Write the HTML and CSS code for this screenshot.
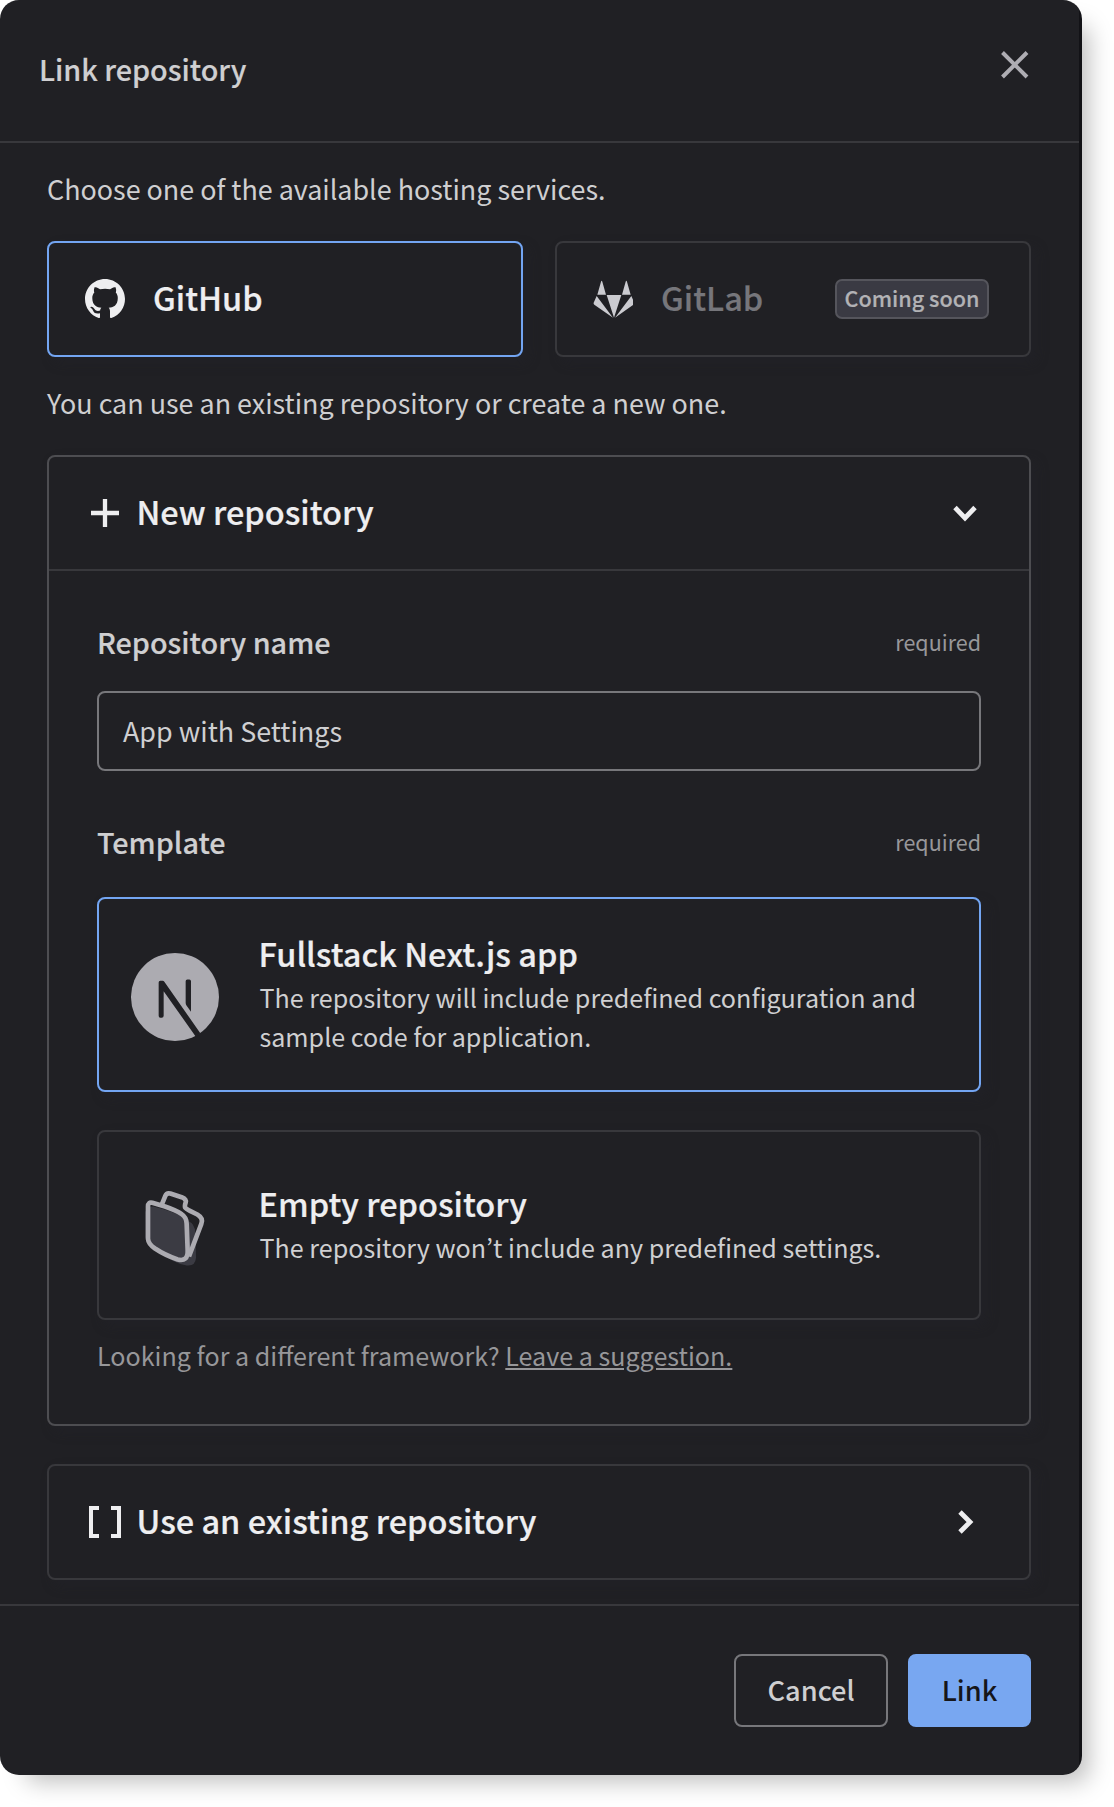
FILE: index.html
```html
<!DOCTYPE html>
<html lang="en">
<head>
<meta charset="utf-8">
<title>Link repository</title>
<link rel="stylesheet" href="styles.css">
</head>
<body>
<div class="modal" role="dialog">
  <header class="modal-header">
    <h1 class="modal-title">Link repository</h1>
    <svg class="close" viewBox="0 0 30 30"><path d="M2.5 2.5 27 27M27 2.5 2.5 27"/></svg>
  </header>

  <main class="modal-body">
    <p class="intro">Choose one of the available hosting services.</p>
    <div class="services">
      <div class="card service selected">
        <svg class="service-icon" viewBox="0 0 16 16"><path fill="#eeeef0" fill-rule="evenodd" d="M8 0C3.58 0 0 3.58 0 8c0 3.54 2.29 6.53 5.47 7.59.4.07.55-.17.55-.38 0-.19-.01-.82-.01-1.49-2.01.37-2.53-.49-2.69-.94-.09-.23-.48-.94-.82-1.13-.28-.15-.68-.52-.01-.53.63-.01 1.08.58 1.23.82.72 1.21 1.87.87 2.33.66.07-.52.28-.87.51-1.07-1.78-.2-3.64-.89-3.64-3.95 0-.87.31-1.59.82-2.15-.08-.2-.36-1.02.08-2.12 0 0 .67-.21 2.2.82.64-.18 1.32-.27 2-.27s1.36.09 2 .27c1.53-1.04 2.2-.82 2.2-.82.44 1.1.16 1.92.08 2.12.51.56.82 1.27.82 2.15 0 3.07-1.87 3.75-3.65 3.95.29.25.54.73.54 1.48 0 1.07-.01 1.93-.01 2.2 0 .21.15.46.55.38A8.01 8.01 0 0 0 16 8c0-4.42-3.58-8-8-8z"/></svg>
        <span class="heading">GitHub</span>
      </div>
      <div class="card service">
        <svg class="service-icon" viewBox="0 0 40 40"><g fill="#cbcbd0" transform="translate(-12 -9) scale(.3333)"><path d="M60 35Q62 29 64 35L75 74H49ZM134 35Q136 29 138 35L149 74H123ZM77 75H121L99 143ZM47 78 38 98Q37 102 40 104L96 143ZM151 78 160 98Q161 102 158 104L102 143Z"/></g></svg>
        <span class="heading muted">GitLab</span>
        <span class="badge">Coming soon</span>
      </div>
    </div>

    <p class="intro">You can use an existing repository or create a new one.</p>
    <section class="card panel">
      <div class="panel-head">
        <svg class="panel-icon" viewBox="0 0 32 32"><path d="M2 16H30M16 2V30"/></svg>
        <h2 class="heading">New repository</h2>
        <svg class="chevron" viewBox="0 0 28 28"><path d="M4 8.5 14 19 24 8.5"/></svg>
      </div>
      <div class="panel-body">
        <div class="field-head"><label class="field-label">Repository name</label><span class="required">required</span></div>
        <div class="input">App with Settings</div>
        <div class="field-head template-head"><span class="field-label">Template</span><span class="required">required</span></div>
        <div class="card template nextjs selected">
          <svg class="template-icon" viewBox="0 0 88 88"><g transform="translate(-21 -22.83) scale(.3333)"><circle cx="195" cy="200.5" r="132" fill="#acabb1"/><path fill="#202024" d="M146 157q0-5 5-5h7q3 0 5 3L271 309Q265 315 257 319L161 183V257q0 6-6 6h-4q-5 0-5-6ZM227 153q0-5 5-5h6q5 0 5 5V245L229 225Q227 222 227 218Z"/></g></svg>
          <div class="template-text">
            <h3 class="heading template-title">Fullstack Next.js app</h3>
            <p class="description">The repository will include predefined configuration and sample code for application.</p>
          </div>
        </div>
        <div class="card template empty">
          <svg class="template-icon" viewBox="0 0 88 88"><g transform="translate(-21 -13.5) scale(.3333)"><path fill="#3b3b43" d="M106 125Q110 108 130 108Q190 122 230 145Q256 158 257 185L258 262Q256 288 230 285Q190 278 150 245L122 225L106 200Z"/><path fill="#202024" d="M160 102 167 77 181 70 226 84 225 112 270 142 257 190Q256 160 232 150Q215 130 160 102Z"/><path class="folder-line" d="M155 103 166 76Q170 66 181 69L215 80Q230 86 227 96 223 108 226 112 228 115 240 121L262 132Q281 143 274 160L237 258"/><path class="folder-line" d="M114 108Q114 94 127 97L165 108Q200 120 215 131 230 141 230 160L233 240Q234 275 203 267 165 254 135 234 115 220 114 205Z"/></g></svg>
          <div class="template-text">
            <h3 class="heading template-title">Empty repository</h3>
            <p class="description">The repository won<span class="apostrophe">’</span>t include any predefined settings.</p>
          </div>
        </div>
        <p class="hint">Looking for a different framework? <a class="hint-link">Leave a suggestion.</a></p>
      </div>
    </section>

    <section class="card existing">
      <svg class="panel-icon" viewBox="0 0 32 32"><path class="bracket" d="M10 2H2V30H10M22 2H30V30H22"/></svg>
      <h2 class="heading">Use an existing repository</h2>
      <svg class="chevron" viewBox="0 0 28 28"><path d="M9 4 19 14 9 24"/></svg>
    </section>
  </main>

  <footer class="modal-footer">
    <button class="button">Cancel</button>
    <button class="button primary">Link</button>
  </footer>
</div>
</body>
</html>
```
FILE: styles.css
```css
* { box-sizing: border-box; }

body {
  margin: 0;
  height: 1807px;
  overflow: hidden;
  background: #fff;
  font-family: "Noto Sans CJK SC", "Noto Sans", sans-serif;
  color: #cfcfd1;
}

h1, h2, h3, p { margin: 0; font-weight: 400; }
svg { display: block; flex: none; fill: none; }

.modal {
  width: 1082px;
  height: 1775px;
  padding-right: 3px;
  border-radius: 19px;
  background: linear-gradient(to right, #202024 1079px, #121216 1079px);
  box-shadow: 16px 16px 24px -10px rgba(0, 0, 0, .27);
}

.modal-header {
  display: flex;
  justify-content: space-between;
  align-items: flex-start;
  height: 143px;
  padding: 48px 49px 0 39px;
  border-bottom: 2px solid #38383c;
}
.modal-title { font-size: 28.75px; font-weight: 500; line-height: 42px; }
.close { width: 30px; height: 30px; margin-top: 2px; stroke: #aeadb3; stroke-width: 4; }

.modal-title, .heading, .field-label, .badge { -webkit-text-stroke: .2px currentColor; }

.modal-body { padding: 0 48px 24px 47px; }
.intro { margin: 26px 0 32px; font-size: 26.9px; line-height: 40px; }

.card {
  border: 2px solid #38383c;
  border-radius: 8px;
  background: #202024;
  box-shadow: 6px 6px 12px rgba(36, 36, 43, .4);
}
.card.selected { border-color: #73a5f2; }

.heading { padding-bottom: 4px; font-size: 32.5px; font-weight: 500; line-height: 44px; color: #eeeef0; }
.muted { color: #76767b; }

.services { display: grid; grid-template-columns: 1fr 1fr; gap: 32px; }
.service { display: flex; align-items: center; height: 116px; padding: 0 40px 0 36px; }
.service-icon { width: 40px; height: 40px; margin-right: 28px; }
.badge {
  display: flex;
  align-items: center;
  justify-content: center;
  width: 154px;
  height: 40px;
  margin-left: auto;
  padding-bottom: 3px;
  border: 2px solid #55555c;
  border-radius: 7px;
  background: #3a3a43;
  color: #b2b2b5;
  font-size: 21.6px;
  font-weight: 500;
}

.panel { height: 971px; border-color: #4d4d51; }
.panel-head, .existing { display: flex; align-items: center; padding: 0 50px 0 40px; }
.panel-head { height: 114px; border-bottom: 2px solid #38383c; }
.panel-icon { width: 32px; height: 32px; margin-right: 15.5px; stroke: #eeeef0; stroke-width: 4.3; }
.bracket { stroke-width: 4; }
.chevron { width: 28px; height: 28px; margin-left: auto; stroke: #eeeef0; stroke-width: 4.8; }

.panel-body { padding: 51px 48px 0; }
.field-head { display: flex; justify-content: space-between; line-height: 40px; }
.template-head { margin-top: 51px; }
.field-label { font-size: 28.75px; font-weight: 500; }
.required { color: #97979a; font-size: 21.5px; }
.input {
  display: flex;
  align-items: center;
  height: 80px;
  margin-top: 29px;
  padding: 0 24px 1px;
  border: 2px solid #77777b;
  border-radius: 8px;
  font-size: 26.9px;
}

.template { display: flex; align-items: center; gap: 39.5px; padding: 0 32px; }
.template.nextjs { height: 195px; margin-top: 35px; }
.template.empty { height: 190px; margin-top: 38px; }
.template-icon { width: 88px; height: 88px; margin-top: 5px; }
.template-text { padding-bottom: 2px; }
.template-title { padding: 0; margin-bottom: 4px; line-height: 42px; }
.description { padding-left: 1px; font-size: 25.1px; line-height: 39px; }
.apostrophe { font-family: "Noto Sans CJK KR", "Noto Sans", sans-serif; }
.folder-line { stroke: #acabb1; stroke-width: 14; stroke-linejoin: round; }

.hint { margin-top: 16px; color: #97979a; font-size: 25.1px; line-height: 39px; }
.hint-link { text-decoration: underline; }

.existing { height: 116px; margin-top: 38px; }

.modal-footer {
  display: flex;
  justify-content: flex-end;
  gap: 20px;
  padding: 48px 48px 0;
  border-top: 2px solid #38383c;
}
.button {
  width: 154px;
  height: 73px;
  padding: 0 0 3px;
  border: 2px solid #77777b;
  border-radius: 8px;
  background: none;
  color: #cfcfd1;
  font: 500 27.2px/40px "Noto Sans CJK SC", "Noto Sans", sans-serif;
}
.button.primary { width: 123px; border-color: #78a7f1; background: #78a7f1; color: #16161a; }
```
